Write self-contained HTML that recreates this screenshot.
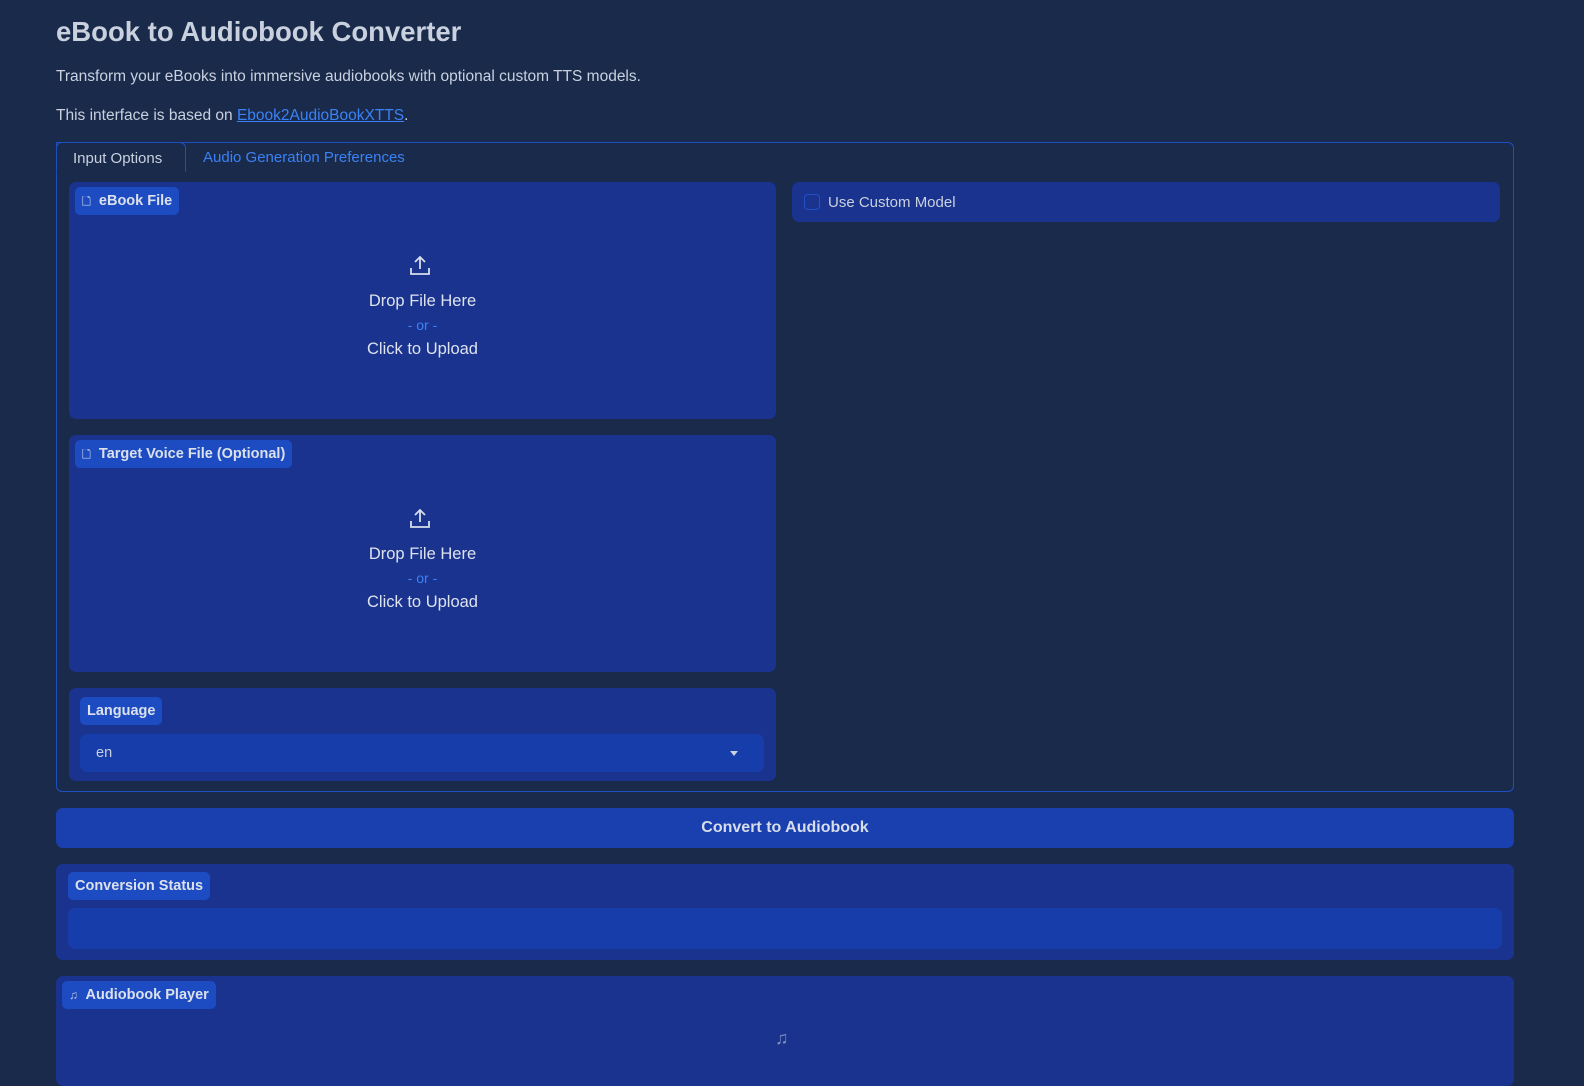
<!DOCTYPE html>
<html><head><meta charset="utf-8"><style>
*{box-sizing:border-box;margin:0;padding:0}
body{width:1584px;height:1077px;overflow:hidden;background:#1a2a4b;font-family:"Liberation Sans",sans-serif;color:#d7dde9;position:relative}
.a{position:absolute}
h1{position:absolute;left:56px;top:16px;font-size:27.5px;font-weight:bold;color:#c9d1df}
.p{font-size:15.5px;color:#c9d1df}
.tabs{left:56px;top:142px;width:1458px;height:650px;border:1px solid #1f4fbf;border-radius:0 6px 6px 6px}
.tab1{left:56px;top:142px;width:130px;height:30px;border:1px solid #1f4fbf;border-bottom:1px solid #1a2a4b;border-radius:6px 6px 0 0;background:#1a2a4b;font-size:15px;color:#c9d1df;padding:7px 0 0 16px;z-index:2}
.panel{background:#1a338e;border-radius:7px}
.lbl{background:#1d4bc2;border-radius:5px;font-weight:bold;font-size:14.5px;color:#dbe1ec;padding:0 7px;height:28px;line-height:28px}
.up{text-align:center;font-size:16.5px;color:#dde3ee;line-height:24px}
.or{color:#3b82f6;font-size:14px}
.inp{background:#163da9;border-radius:7px}
</style></head><body>
<h1>eBook to Audiobook Converter</h1>
<div class="a p" style="left:56px;top:68px">Transform your eBooks into immersive audiobooks with optional custom TTS models.</div>
<div class="a p" style="left:56px;top:107px">This interface is based on <span style="color:#3b82f6;text-decoration:underline">Ebook2AudioBookXTTS</span>.</div>
<div class="a tabs"></div>
<div class="a tab1">Input Options</div>
<div class="a" style="left:203px;top:149px;font-size:15px;color:#3b82f6">Audio Generation Preferences</div>

<div class="a panel" style="left:69px;top:182px;width:707px;height:237px"></div>
<div class="a lbl" style="left:75px;top:187px"><span style="font-size:11px;opacity:.7">🗋</span>&nbsp; eBook File</div>
<svg class="a" style="left:409px;top:254px" width="22" height="22" viewBox="0 0 22 22" fill="none" stroke="#d7dde9" stroke-width="1.8"><path d="M11 15V3M6 8l5-5 5 5M2 14v6h18v-6"/></svg>
<div class="a up" style="left:69px;top:289px;width:707px">Drop File Here<br><span class="or">- or -</span><br>Click to Upload</div>

<div class="a panel" style="left:69px;top:435px;width:707px;height:237px"></div>
<div class="a lbl" style="left:75px;top:440px"><span style="font-size:11px;opacity:.7">🗋</span>&nbsp; Target Voice File (Optional)</div>
<svg class="a" style="left:409px;top:507px" width="22" height="22" viewBox="0 0 22 22" fill="none" stroke="#d7dde9" stroke-width="1.8"><path d="M11 15V3M6 8l5-5 5 5M2 14v6h18v-6"/></svg>
<div class="a up" style="left:69px;top:542px;width:707px">Drop File Here<br><span class="or">- or -</span><br>Click to Upload</div>

<div class="a panel" style="left:69px;top:688px;width:707px;height:93px"></div>
<div class="a lbl" style="left:80px;top:697px">Language</div>
<div class="a inp" style="left:80px;top:734px;width:684px;height:38px"></div>
<div class="a" style="left:96px;top:745px;font-size:14.5px;color:#c9d1df">en</div>
<div class="a" style="left:730px;top:751px;border:4px solid transparent;border-top:5px solid #c9d1df"></div>

<div class="a panel" style="left:792px;top:182px;width:708px;height:40px"></div>
<div class="a" style="left:804px;top:194px;width:16px;height:16px;border:1px solid #2451c7;border-radius:4px;background:#1a338e"></div>
<div class="a" style="left:828px;top:194px;font-size:15px;color:#c9d1df">Use Custom Model</div>

<div class="a" style="left:56px;top:808px;width:1458px;height:40px;background:#1a40b0;border-radius:7px;text-align:center;line-height:40px;font-weight:bold;font-size:16px;color:#d7dde9">Convert to Audiobook</div>

<div class="a panel" style="left:56px;top:864px;width:1458px;height:96px"></div>
<div class="a lbl" style="left:68px;top:872px">Conversion Status</div>
<div class="a inp" style="left:68px;top:908px;width:1434px;height:41px"></div>

<div class="a panel" style="left:56px;top:976px;width:1458px;height:110px"></div>
<div class="a lbl" style="left:62px;top:981px"><span style="font-size:12px;opacity:.8">♫</span>&nbsp; Audiobook Player</div>
<div class="a" style="left:775px;top:1028px;font-size:18px;color:#7f8fb8">♫</div>
</body></html>
